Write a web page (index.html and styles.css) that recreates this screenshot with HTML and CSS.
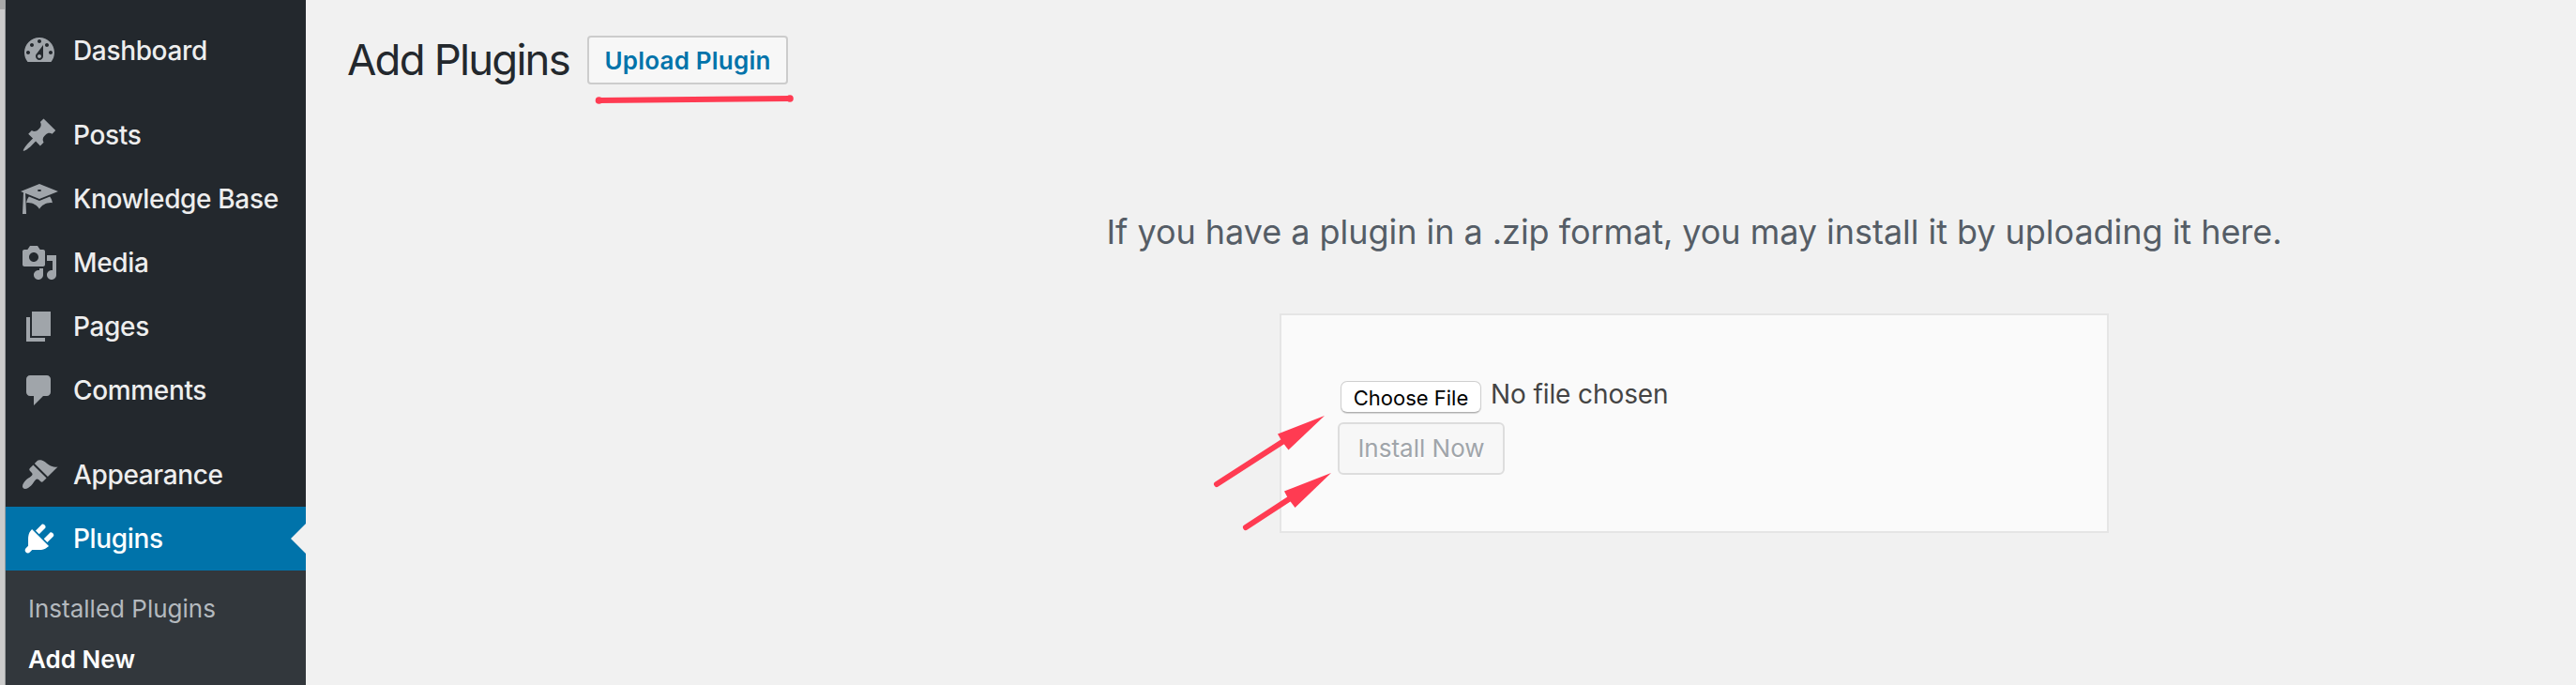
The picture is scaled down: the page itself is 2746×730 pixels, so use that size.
FILE: index.html
```html
<!DOCTYPE html>
<html lang="en">
<head>
<meta charset="utf-8">
<title>Add Plugins</title>
<link rel="stylesheet" href="styles.css">
</head>
<body>
<div class="window-edge"></div>
<nav class="sidebar">
  <a class="item"><svg class="icon" viewBox="0 0 20 20"><path d="M3.76 16h12.48c1.1-1.37 1.76-3.11 1.76-5 0-4.42-3.58-8-8-8s-8 3.58-8 8c0 1.89.66 3.63 1.76 5zM10 4c.55 0 1 .45 1 1s-.45 1-1 1-1-.45-1-1 .45-1 1-1zM6 6c.55 0 1 .45 1 1s-.45 1-1 1-1-.45-1-1 .45-1 1-1zm8 0c.55 0 1 .45 1 1s-.45 1-1 1-1-.45-1-1 .45-1 1-1zm-5.37 5.55L12 7v6c0 1.1-.9 2-2 2s-2-.9-2-2c0-.57.24-1.08.63-1.45zM4 10c.55 0 1 .45 1 1s-.45 1-1 1-1-.45-1-1 .45-1 1-1zm12 0c.55 0 1 .45 1 1s-.45 1-1 1-1-.45-1-1 .45-1 1-1zm-5 3c0-.55-.45-1-1-1s-1 .45-1 1 .45 1 1 1 1-.45 1-1z"/></svg><span>Dashboard</span></a>
  <div class="separator"></div>
  <a class="item"><svg class="icon" viewBox="0 0 20 20"><path d="M10.44 3.02l1.82-1.82 6.36 6.35-1.83 1.82c-1.05-.68-2.48-.57-3.41.36l-.75.75c-.92.93-1.04 2.35-.35 3.41l-1.83 1.82-2.41-2.41-2.8 2.79c-.42.42-3.38 2.71-3.8 2.29s1.86-3.39 2.28-3.81l2.79-2.79L4.1 9.36l1.83-1.82c1.05.69 2.48.57 3.4-.36l.75-.75c.93-.92 1.05-2.35.36-3.41z"/></svg><span>Posts</span></a>
  <a class="item"><svg class="icon" viewBox="0 0 20 20"><path d="M10 10L2.54 7.02 3 18H1l.48-11.41L0 6l10-4 10 4zm0-5c-.55 0-1 .22-1 .5s.45.5 1 .5 1-.22 1-.5-.45-.5-1-.5zm0 6l5.57-2.23c.71.94 1.2 2.07 1.36 3.3-.3-.04-.61-.07-.93-.07-2.55 0-4.78 1.37-6 3.41-1.22-2.04-3.45-3.41-6-3.41-.32 0-.63.03-.93.07.16-1.23.65-2.36 1.36-3.3z"/></svg><span>Knowledge Base</span></a>
  <a class="item"><svg class="icon" viewBox="0 0 20 20"><path d="M13 11V4c0-.55-.45-1-1-1h-1.67L9 1H5L3.67 3H2c-.55 0-1 .45-1 1v7c0 .55.45 1 1 1h10c.55 0 1-.45 1-1zM7 4.5c1.38 0 2.5 1.12 2.5 2.5S8.38 9.5 7 9.5 4.5 8.38 4.5 7 5.62 4.5 7 4.5zM14 6h5v10.5c0 1.38-1.12 2.5-2.5 2.5S14 17.88 14 16.5s1.12-2.5 2.5-2.5c.17 0 .34.02.5.05V9h-3V6zm-4 8.05V13h2v3.5c0 1.38-1.12 2.5-2.5 2.5S7 17.88 7 16.5 8.12 14 9.5 14c.17 0 .34.02.5.05z"/></svg><span>Media</span></a>
  <a class="item"><svg class="icon" viewBox="0 0 20 20"><path d="M6 15V2h10v13H6zm-1 1h8v2H3V5h2v11z"/></svg><span>Pages</span></a>
  <a class="item"><svg class="icon" viewBox="0 0 20 20"><path d="M5 2h9c1.1 0 2 .9 2 2v7c0 1.1-.9 2-2 2h-2l-5 5v-5H5c-1.1 0-2-.9-2-2V4c0-1.1.9-2 2-2z"/></svg><span>Comments</span></a>
  <div class="separator"></div>
  <a class="item"><svg class="icon" viewBox="0 0 20 20"><path d="M14.48 11.06L7.41 3.99l1.5-1.5c.5-.56 2.3-.47 3.51.32 1.21.8 1.43 1.28 2.91 2.1 1.18.64 2.45 1.26 4.45.85zm-.71.71L6.7 4.7 4.93 6.47c-.39.39-.39 1.02 0 1.41l1.06 1.06c.39.39.39 1.03 0 1.42-.6.6-1.43 1.11-2.21 1.69-.35.26-.7.53-1.01.84C1.43 14.23.4 16.08 1.4 17.07c.99 1 2.84-.03 4.18-1.36.31-.31.58-.66.85-1.02.57-.78 1.08-1.61 1.69-2.21.39-.39 1.02-.39 1.41 0l1.06 1.06c.39.39 1.02.39 1.41 0z"/></svg><span>Appearance</span></a>
  <a class="item current"><svg class="icon" viewBox="0 0 20 20"><path d="M13.11 4.36L9.87 7.6 8 5.73l3.24-3.24c.35-.34 1.05-.2 1.56.32.52.51.66 1.21.31 1.55zm-8 1.77l.91-1.12 9.01 9.01-1.19.84c-.71.71-2.63 1.16-3.82 1.16H6.14L4.9 17.26c-.59.59-1.54.59-2.12 0-.59-.58-.59-1.53 0-2.12l1.24-1.24v-3.88c0-1.13.4-3.19 1.09-3.89zm7.26 3.97l3.24-3.24c.34-.35 1.04-.21 1.55.31.52.51.66 1.21.31 1.55l-3.24 3.25z"/></svg><span>Plugins</span></a>
  <div class="submenu">
    <a class="sub">Installed Plugins</a>
    <a class="sub active">Add New</a>
  </div>
</nav>
<main class="content">
  <header class="heading">
    <h1 class="title">Add Plugins</h1>
    <a class="upload">Upload Plugin</a>
  </header>
  <section class="upload-panel">
    <p class="help">If you have a plugin in a .zip format, you may install it by uploading it here.</p>
    <form class="card">
      <div class="file-row">
        <button type="button" class="choose">Choose File</button>
        <span class="filename">No file chosen</span>
      </div>
      <button type="button" class="install" disabled>Install Now</button>
    </form>
  </section>
</main>
<svg class="marks" viewBox="0 0 2746 730">
  <path class="stroke" d="M638.500 107L842 105"/>
  <circle cx="638.500" cy="107" r="3.800"/><circle cx="842" cy="105" r="3.800"/>
  <path class="stroke" d="M1297 516L1370 469"/>
  <path d="M1412 443L1362 462.500 1367 471 1373.500 479.500z"/>
  <path class="stroke" d="M1328 562L1377 530"/>
  <path d="M1419 504L1369 523.500 1373 531 1380.500 541z"/>
</svg>
</body>
</html>
```
FILE: styles.css
```css
* { box-sizing: border-box; }
body {
  margin: 0;
  height: 730px;
  display: flex;
  overflow: hidden;
  background: #f1f1f1;
  font-family: Inter, "Liberation Sans", sans-serif;
  font-size: 28px;
}
.window-edge {
  width: 6px;
  border-right: 1px solid #9c9fa1;
  background: linear-gradient(#a9a9a9 10px, #cbcbcb 10px);
}
.sidebar {
  width: 320px;
  padding-top: 20px;
  background: #23282d;
  color: #eee;
}
.item {
  position: relative;
  display: flex;
  align-items: center;
  height: 68px;
  padding-left: 16px;
  gap: 16px;
  font-weight: 500;
  letter-spacing: -.35px;
}
.icon { width: 40px; height: 40px; fill: #a0a5aa; }
.separator { height: 22px; }
.current { background: #0073aa; color: #fff; }
.current .icon { fill: #fff; }
.current::after {
  content: "";
  position: absolute;
  right: 0;
  top: 18px;
  border: 16px solid transparent;
  border-left: 0;
  border-right-color: #f1f1f1;
}
.submenu {
  height: 122px;
  padding: 14px 24px;
  background: #32373c;
  font-size: 26px;
}
.sub { display: block; line-height: 54px; color: #b4b9be; }
.active { color: #fff; font-weight: 600; }
.content { flex: 1; padding: 38px 0 0 44px; }
.heading { display: flex; height: 52px; }
.title {
  width: 256px;
  margin: 0;
  font-size: 45.5px;
  font-weight: 400;
  line-height: 52px;
  letter-spacing: -1.8px;
  color: #23282d;
  white-space: nowrap;
}
.upload {
  width: 214px;
  height: 52px;
  border: 2px solid #ccc;
  border-radius: 4px;
  background: #f7f7f7;
  color: #0073aa;
  font-size: 26px;
  font-weight: 600;
  line-height: 49px;
  letter-spacing: .2px;
  text-align: center;
}
.upload-panel {
  display: flex;
  flex-direction: column;
  align-items: center;
  padding: 132px 0 0 496px;
}
.help {
  margin: 0;
  font-size: 36px;
  line-height: 50px;
  letter-spacing: -.04px;
  color: #555d66;
  white-space: nowrap;
}
.card {
  width: 884px;
  height: 234px;
  margin-top: 62px;
  padding: 70px 60px;
  border: 2px solid #e5e5e5;
  background: #fafafa;
}
.file-row { display: flex; height: 44px; padding-left: 3px; gap: 10px; }
.choose {
  width: 150px;
  height: 34px;
  padding: 0;
  border: 1px solid #cfcfcf;
  border-bottom-color: #b0b0b0;
  border-radius: 7px;
  background: #fff;
  box-shadow: 0 1px 1px rgba(0, 0, 0, .15);
  color: #000;
  font: 22px/34px Inter, sans-serif;
  white-space: nowrap;
}
.filename { color: #444; line-height: 28px; white-space: nowrap; letter-spacing: -.1px; }
.install {
  display: block;
  width: 178px;
  height: 56px;
  padding: 0;
  border: 2px solid #ddd;
  border-radius: 6px;
  background: #f7f7f7;
  color: #a0a5aa;
  font: 26px/52px Inter, sans-serif;
  text-shadow: 0 2px 0 #fff;
  white-space: nowrap;
}
.marks { position: absolute; left: 0; top: 0; width: 2746px; height: 730px; fill: #ff3b52; }
.stroke { stroke: #ff3b52; stroke-width: 6; stroke-linecap: round; }
```
